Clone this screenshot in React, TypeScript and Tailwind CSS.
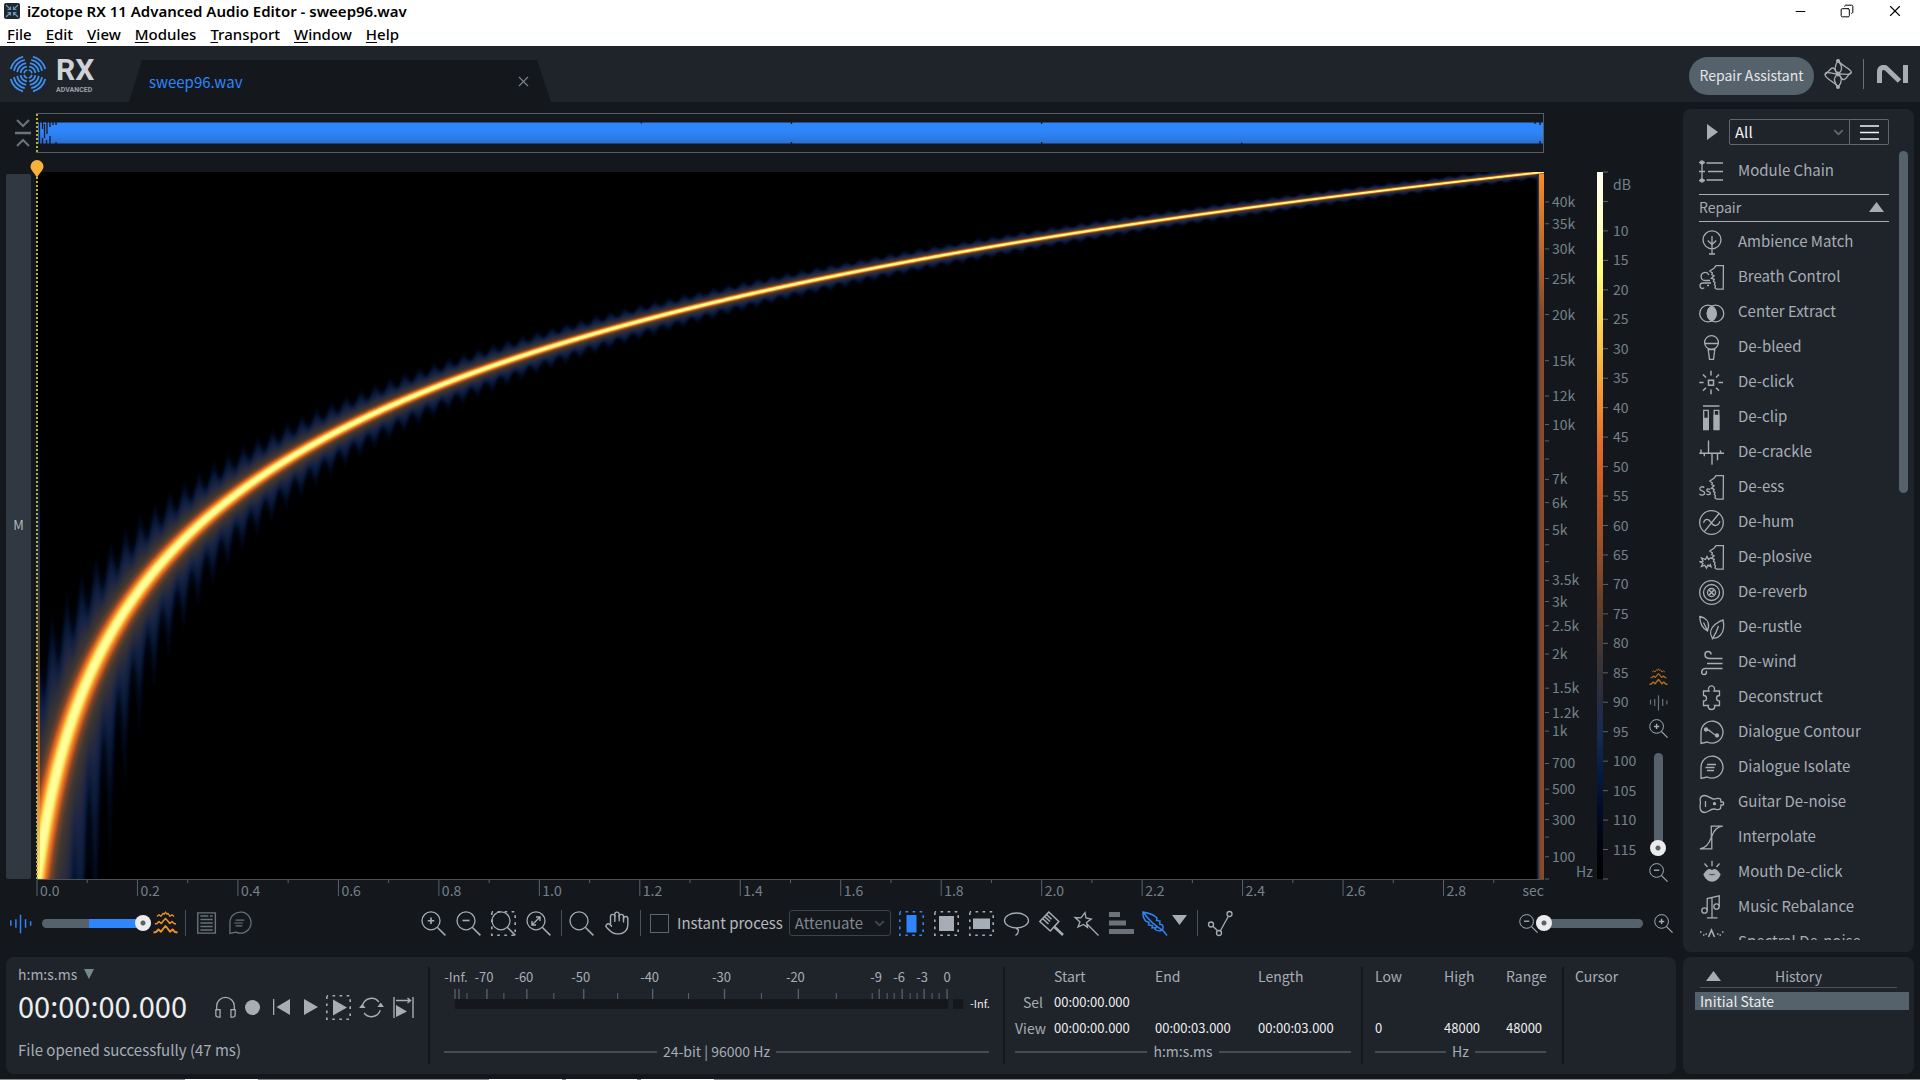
import React from 'react';
import { ChevronDown, Copy, Hand, Minus, X } from 'lucide-react';

const MAX_HZ = 48000;
const PLOT_W = 1507;
const PLOT_H = 707;

// mel style frequency axis, 0 = top, 1 = bottom
const freqPos = (hz: number) =>
    1 - Math.log(1 + Math.max(hz, 0) / 700) / Math.log(1 + MAX_HZ / 700);

// [distance from the ridge, r, g, b]
const HEAT: number[][] = [
    [0, 255, 255, 175],
    [4, 255, 250, 130],
    [6, 253, 205, 75],
    [8, 243, 145, 48],
    [11, 205, 92, 36],
    [14, 120, 68, 40],
    [19, 66, 56, 50],
    [26, 46, 46, 58],
    [33, 26, 36, 68],
    [41, 10, 26, 56],
    [50, 3, 10, 27],
    [64, 0, 0, 0],
];

const heatColor = (d: number) => {
    const i = Math.max(1, HEAT.findIndex(stop => stop[0] >= d));
    const a = HEAT[i - 1];
    const b = HEAT[i];
    const t = (d - a[0]) / (b[0] - a[0]);
    const mix = [1, 2, 3].map(k => Math.round(a[k] + (b[k] - a[k]) * t));
    return `rgb(${mix.join(',')})`;
};

const ridgeBand = (d: number) => {
    const depth = Math.min(Math.max((d - 18) / 30, 0), 1) * 0.18;
    const top: string[] = [];
    const bottom: string[] = [];
    for (let x = 0; x <= PLOT_W; x += 1) {
        const w = d * (1 + depth * Math.cos((2 * Math.PI * x) / 14.7));
        const hz = (px: number) => (px * MAX_HZ) / PLOT_W;
        top.push(`${x},${(freqPos(hz(x + w)) * PLOT_H).toFixed(1)}`);
        bottom.push(`${x},${(freqPos(hz(x - w)) * PLOT_H).toFixed(1)}`);
    }
    return [...top, ...bottom.reverse()].join(' ');
};

const BANDS = Array.from({ length: 58 }, (_, i) => {
    const d = 63 - i * 1.1;
    return { d, points: ridgeBand(d), color: heatColor(d) };
});

const FREQ_LABELS: [number, string][] = [
    [40000, '40k'], [35000, '35k'], [30000, '30k'], [25000, '25k'], [20000, '20k'],
    [15000, '15k'], [12000, '12k'], [10000, '10k'], [9000, ''], [8000, ''], [7000, '7k'],
    [6000, '6k'], [5000, '5k'], [4500, ''], [4000, ''], [3500, '3.5k'], [3000, '3k'],
    [2500, '2.5k'], [2000, '2k'], [1500, '1.5k'], [1200, '1.2k'], [1000, '1k'],
    [700, '700'], [500, '500'], [400, ''], [300, '300'], [200, ''], [100, '100'],
];

const METER_LABELS: [number, string][] = [
    [456, '-Inf.'], [484, '-70'], [524, '-60'], [581, '-50'], [650, '-40'], [722, '-30'],
    [796, '-20'], [877, '-9'], [900, '-6'], [923, '-3'], [948, '0'],
];
const METER_TALL = [455, 459, 487, 527, 584, 653, 725, 799, 880, 903, 925, 948];
const METER_SHORT = [467, 504, 554, 618, 689, 762, 837, 873, 888, 895, 911, 918, 933, 940];
const meterX = (x: number) => `${((x - 444) / 546) * 100}%`;

const Svg = ({ children, size = 'size-[25px]', className = '' }: { children: React.ReactNode; size?: string; className?: string }) => (
    <svg viewBox="0 0 25 25" className={`${size} shrink-0 overflow-visible ${className}`} fill="none" stroke="currentColor" strokeWidth="1.3">
        {children}
    </svg>
);

const Face = () => <path d="M24.4 .7H17L15 3.2 10.8 6l2.6 2-.6 1.6 2.2 1.2-2.6 2.4 2.8 1.2-.8 2 1.6 1-.6 2.2 1 1-.4 2.4 1.8 1.2 6.4-.2z" />;

const Bubble = () => <path d="M2 23.4V12A11 11 0 1 1 8.2 22z" />;

const Waves = () => (
    <g strokeLinejoin="round">
        <path d="M4 5.5l2-1.8 2 1.6 2-3 1.2 1L12.500 1l1.300 2.300 1.200-1 2 3 2-1.600 2 1.800" strokeWidth="1.2" />
        <path d="M2 13l2-.5 2-2 2.200 2 2-2.500 2.300-2.500 2.300 2.500 2 2.500 2.200-2 2 2 2 .5" strokeWidth="1.5" />
        <path d="M.5 21.500l2.500-.5 2.500-2.500 2.500 2.300 2-2.800 2.500-3 2.500 3 2 2.800 2.500-2.300 2.500 2.500 2.500.5" strokeWidth="1.9" />
    </g>
);

const WaveBars = () => <path d="M2 9v6M7.500 8v9M12.500 3v20M18 8v9M23.500 10v5" strokeWidth="1.6" />;

const Magnifier = ({ children, size }: { children?: React.ReactNode; size?: string }) => (
    <Svg size={size}>
        <circle cx="10" cy="9.800" r="9" />
        <path d="M16.200 16.200L24.400 24.400" strokeWidth="1.5" />
        {children}
    </Svg>
);

const Marquee = () => <path d="M.8 .8H24.200V24.200H.8z" strokeWidth="1.6" strokeDasharray="2.6 4.45" strokeDashoffset="1.3" />;

const MODULES: { name: string; icon: React.ReactNode }[] = [
    { name: 'Ambience Match', icon: <><circle cx="13" cy="9.800" r="9" /><path d="M13 6v18M8.800 10.500l4.200 4 4.200-4M10 24h6" /></> },
    { name: 'Breath Control', icon: <><Face /><path d="M11 15.500H6a4 4 0 1 1 3.800-5.500M12 18H4a3 3 0 0 0-3 3c0 2.500 3 3.200 4.200 1.600M10 20.500H8" /></> },
    { name: 'Center Extract', icon: <><circle cx="9" cy="13.500" r="8.300" /><circle cx="16.500" cy="13.500" r="8.300" /><path d="M12.700 6.200a8.300 8.300 0 0 1 0 14.600 8.300 8.300 0 0 1 0-14.600z" fill="currentColor" /></> },
    { name: 'De-bleed', icon: <><circle cx="12.500" cy="7.500" r="6.900" /><path d="M5.600 8.500h13.800M9.200 14.500l1.300 9.900h4l1.300-9.900z" /></> },
    { name: 'De-click', icon: <path d="M9.500 10.200h5v5h-5zM12 .8V5.500M12 19.500v4.700M.3 12.500H4.600M19.500 12.500H24M4 4.500l3 3M20 4.500l-3 3M4 20.700l3-3M20 20.700l-3-3" strokeWidth="1.5" /> },
    { name: 'De-clip', icon: <><path d="M4 1h16.500" strokeWidth="1.500" /><path d="M4.700 5.300h4.600v19H4.700zM15.200 5.300h4.600v19h-4.600z" /><path d="M4.700 13.500h4.600v11H4.700zM15.200 10.500h4.600v14h-4.600z" fill="currentColor" /></> },
    { name: 'De-crackle', icon: <path d="M.3 13.300H25M2 9.500v4M5.300 13.300v3M9.500.5v12.800M13 13.300v11.500M18.500 13.300v7M21.500 10.500v3" strokeWidth="1.400" /> },
    { name: 'De-ess', icon: <><Face /><path d="M5.300 12.600C3.500 11 .8 11.800.8 13.700c0 2.600 4.900 1.600 4.900 4.400 0 2.100-3.300 2.800-5.300 1M11.200 14.500c-1.400-1-3.500-.6-3.500.8 0 1.700 3.700 1.100 3.700 2.900 0 1.700-2.700 1.800-4 .8" /></> },
    { name: 'De-hum', icon: <><circle cx="12.500" cy="12.500" r="11.800" /><path d="M20 3.500L5.200 21.800M4.500 12.800c1.500-4.500 5-4.500 7.500-.5s6.500 5 9-1" /></> },
    { name: 'De-plosive', icon: <><Face /><path d="M12 12.500l-2.500 2-1.500-3-1.500 3-4-1.500 1.500 3-3 .8 3 1.500-1.500 3.200 3.200-1.300 1.800 3 1.300-3 3.200 1.500-1-3" /></> },
    { name: 'De-reverb', icon: <><circle cx="12.500" cy="12.500" r="11.800" /><circle cx="12.500" cy="12.500" r="8" /><circle cx="12.500" cy="12.500" r="4" /><path d="M10 10l5 5M15 10l-5 5" strokeWidth="1.600" /></> },
    { name: 'De-rustle', icon: <><path d="M8.500 16C3 13 .8 9 .8 1.500 6 2.500 10.200 6 9.500 12zM4.500 7.500l4 8M13 22.500c-3-4.500-1-9.500 3-13 3-2.500 6-4 8-4.500 1.500 6 .5 11.500-2.500 15-2.500 2.800-6 3.500-8.500 2.500zM19.500 11c-1.500 5-3.500 9-6.500 13.500" /></> },
    { name: 'De-wind', icon: <path d="M23.500 8.500H11C8 8.500 6 7 6 4.500c0-4 6-4 6 0M8 13.500h15.500M23.500 18.500H6.500c-4.500 0-5 6-1.500 6 2.500 0 3-2.500 2-3.500" strokeWidth="1.500" /> },
    { name: 'Deconstruct', icon: <path d="M4.500 6H10C8.500 3.500 10 .8 12.500.8S16.500 3.500 15 6h5.500v4.500c-2 0-3 1-3 2.800s1 2.800 3 2.800V20.500H15.500c1 2-.5 4-3 4s-4-2-3-4H4.500V16c2 0 3-1 3-2.800s-1-2.700-3-2.700z" /> },
    { name: 'Dialogue Contour', icon: <><Bubble /><circle cx="7" cy="9.500" r="1.500" fill="currentColor" /><circle cx="18" cy="15.500" r="1.500" fill="currentColor" /><path d="M7 9.500c5-.5 6 5.500 11 6" /></> },
    { name: 'Dialogue Isolate', icon: <><Bubble /><path d="M8 9.500h9M6.500 12.500h9M8 15.500h7" /></> },
    { name: 'Guitar De-noise', icon: <><path d="M24.500 12v3M24.500 12h-2.500l-.5-3c-3-2-4 .5-7 0S9 5.500 5.500 5.500C1 5.500.7 9 1.500 12.500.5 18 1 22.500 5.500 22.500c4 0 5-3 9-3.500 3-.3 4 2 7-.5l.5-3.500h2.500M6.500 11v6" /><circle cx="15.500" cy="13.700" r="1" fill="currentColor" /></> },
    { name: 'Interpolate', icon: <path d="M23.800 1.200C18 1.500 15 5 12.500 12S7 23.500.8 23.800M23.800 1.200H12.300v11M12.800 12v11.800H.8" /> },
    { name: 'Mouth De-click', icon: <><path d="M13 .8v5.500M5.500 3.500l3 3.500M20.500 3.500l-3 3.500" /><path d="M5 14.500c3-5 6-6 8-3.500 2-2.500 5-1.500 8 3.500-2 4.500-5 6.500-8 6.500s-6-2-8-6.500z" fill="currentColor" /><path d="M8.500 14.500c3-1.200 6-1.200 9 0-3 2-6 2-9 0z" fill="#1f242b" /></> },
    { name: 'Music Rebalance', icon: <><circle cx="5.500" cy="15.500" r="2.700" /><circle cx="17.500" cy="11.500" r="2.700" /><path d="M8.200 15.500V3.500L20.200.8V11.500M13 2.500V22.500M8 22.800h10.500" /></> },
    { name: 'Spectral De-noise', icon: <path d="M1 2h1.500M4 5h1.500M6.500 4H8M18 4h1.500M20.500 5H22M23 2h1.500M9.500 7l3-7 3 7" strokeWidth="1.600" /> },
];

const IconButton = ({ label, children, className = '' }: { label: string; children: React.ReactNode; className?: string }) => (
    <button aria-label={label} className={`flex shrink-0 items-center justify-center ${className}`}>
        {children}
    </button>
);

const thumb =
    '[&::-webkit-slider-thumb]:appearance-none [&::-webkit-slider-thumb]:size-4 [&::-webkit-slider-thumb]:rounded-full [&::-webkit-slider-thumb]:bg-[radial-gradient(circle,#56626b_2px,#ececec_3px)]';
const sliderBase = `appearance-none bg-transparent ${thumb}`;
const hTrack =
    '[&::-webkit-slider-runnable-track]:h-[9px] [&::-webkit-slider-runnable-track]:rounded-full [&::-webkit-slider-thumb]:-mt-[4px]';

const WindowBar = () => (
    <div className="h-[46px] bg-white font-['Noto_Sans','Open_Sans',sans-serif] text-[15px] text-black">
        <div className="flex h-[22px] items-center pl-1">
            <svg viewBox="0 0 16 16" className="size-4">
                <rect width="16" height="16" rx="2" fill="#1d2730" />
                <path d="M2 2l4 4M14 2l-4 4M2 14l4-4M14 14l-4-4M6.500 3.500v3h-3M9.500 3.500v3h3M6.500 12.500v-3h-3M9.500 12.500v-3h3" stroke="#6d95b5" strokeWidth="1.200" fill="none" />
            </svg>
            <h1 className="ml-[7px] font-semibold leading-[22px]">iZotope RX 11 Advanced Audio Editor - sweep96.wav</h1>
            <div className="ml-auto flex items-center gap-8 pr-4">
                <IconButton label="Minimize"><Minus className="size-[15px]" strokeWidth={1.7} /></IconButton>
                <IconButton label="Restore"><Copy className="size-[14px] -scale-x-100" strokeWidth={1.7} /></IconButton>
                <IconButton label="Close"><X className="size-[18px]" strokeWidth={1.5} /></IconButton>
            </div>
        </div>
        <nav className="flex h-6 items-center gap-[14px] pl-[7px] font-medium">
            {['File', 'Edit', 'View', 'Modules', 'Transport', 'Window', 'Help'].map(item => (
                <button key={item} className="leading-6">
                    <span className="underline underline-offset-2">{item[0]}</span>{item.slice(1)}
                </button>
            ))}
        </nav>
    </div>
);

const ring = (r: number, spread: number) =>
    [45, 135, 225, 315].map(a => {
        const p = (deg: number) => `${(19 + r * Math.cos((deg * Math.PI) / 180)).toFixed(2)} ${(19 + r * Math.sin((deg * Math.PI) / 180)).toFixed(2)}`;
        return `M${p(a - spread)}A${r} ${r} 0 0 1 ${p(a + spread)}`;
    }).join('');

const Header = () => (
    <header className="flex h-14 shrink-0 bg-[#1f242b]">
        <div className="flex w-[129px] pl-[9px]">
            <svg viewBox="0 0 38 38" className="mt-[9px] size-[38px]" fill="none" stroke="#3f90f5" strokeWidth="1.800">
                <path d={ring(18, 29) + ring(14.500, 32) + ring(11, 35) + ring(7.500, 36)} />
                <path d={ring(4, 34)} strokeWidth="1.500" />
            </svg>
            <div className="ml-[9px] flex flex-col pt-[9px] font-['Roboto',sans-serif] font-bold text-[#cfd2d6]">
                <span className="text-[30px] leading-[30px]">RX</span>
                <span className="mt-px text-[7px] leading-2 text-[#9aa1a8]">ADVANCED</span>
            </div>
        </div>
        <div className="mt-[14px] flex w-[422px] items-center bg-[#14181c] pl-5 pr-[19px] pt-px [clip-path:polygon(13px_0,calc(100%-14px)_0,100%_100%,0_100%)]">
            <span className="text-[15px] leading-5 text-[#2f86fb]">sweep96.wav</span>
            <IconButton label="Close tab" className="ml-auto text-[#7b868e]"><X className="size-[17px]" strokeWidth={1.500} /></IconButton>
        </div>
        <div className="ml-auto flex items-center pr-3 text-[#a7adb5]">
            <button className="mt-1 h-[38px] w-[125px] rounded-full bg-[#56626b] pb-px text-[14px] text-[#e4e6e8]">Repair Assistant</button>
            <svg viewBox="0 0 28 30" className="ml-[10px] h-[30px] w-7" fill="none" stroke="currentColor" strokeWidth="1.300">
                <path d="M14 1.500c4 5.500 13 8.500 13.300 11.500.2 3.500-5 2-13.300 2S2 11 1 15.500c-.3 4 9 7 13 12.500" />
                <path d="M14 1.500C11 6 9.500 12 14 15s4.500 8 0 13" />
                <path d="M14 1.500c4 5 5.500 9.500 0 13.500s-4 8 0 13" />
                <path d="M1 15.500c3-1 5-7 8-6.500 3 .5 2 4 5 6s3 6 6 5.500c3-.5 4-5.500 7-7" />
                <circle cx="14" cy="1.800" r="1.300" fill="currentColor" />
                <circle cx="14" cy="15" r="1.800" fill="currentColor" />
                <circle cx="14" cy="28" r="1.300" fill="currentColor" />
            </svg>
            <span className="ml-[11px] h-[30px] w-px bg-[#68727a]" />
            <svg viewBox="0 0 31 18" className="ml-[13px] h-[18px] w-[31px]" fill="none" stroke="currentColor" strokeWidth="5">
                <path d="M2.500 18V7c0-4 4-6 7-3.500L22.500 16M28.500 0V18" />
            </svg>
        </div>
    </header>
);

const Overview = () => (
    <div className="flex h-10">
        <div className="flex w-[30px] text-[#6b747c]">
            <svg viewBox="0 0 18 28" className="ml-2 mt-[6px] h-7 w-[18px]" fill="none" stroke="currentColor" strokeWidth="2">
                <path d="M3 1l6 6 6-6M3 27l6-6 6 6" />
                <path d="M1 14h16" strokeWidth="2.500" />
            </svg>
        </div>
        <div className="mr-[132px] flex flex-1 items-center border border-[#555d64] border-l-0">
            <div className="h-full border-l-2 border-dotted border-[#b5b03e]" />
            <svg viewBox="0 0 1504 22" preserveAspectRatio="none" className="h-[22px] w-full">
                <defs>
                    <linearGradient id="wave" x1="0" y1="0" x2="0" y2="1">
                        <stop offset=".45" stopColor="#2f86fb" />
                        <stop offset="1" stopColor="#2a70d2" />
                    </linearGradient>
                </defs>
                <rect y=".5" width="1504" height="21" fill="url(#wave)" />
                <path d="M1.500 0v22M4.500 0v7M4.500 16v6M6.500 2v14M9 0v12M8.500 18v4M12 0v5M12 14v8M15 0v3M18 0v3M18 20v2M753 0v2M753 20v2M1003 0v2M1003 20v2M603 0v1.500M1203 20.500v1.500M1496 0v2M1501 0v3M1501 19v3" stroke="#14181c" strokeWidth="1.300" />
            </svg>
        </div>
    </div>
);

const Spectrogram = () => (
    <div className="relative min-w-0 flex-1 bg-black">
        <svg viewBox={`0 0 ${PLOT_W} ${PLOT_H}`} preserveAspectRatio="none" className="absolute inset-0 h-full w-full">
            <defs>
                <linearGradient id="startEdge" x1="0" y1="0" x2="0" y2="1">
                    <stop offset=".35" stopColor="#0a1c3e" stopOpacity="0" />
                    <stop offset=".5" stopColor="#12254c" />
                    <stop offset=".7" stopColor="#54402f" />
                    <stop offset=".85" stopColor="#d8662a" stopOpacity=".8" />
                    <stop offset="1" stopColor="#fff27a" />
                </linearGradient>
                <linearGradient id="endEdge">
                    <stop offset="0" stopColor="#0c1f44" stopOpacity="0" />
                    <stop offset=".3" stopColor="#26304a" />
                    <stop offset=".5" stopColor="#7d472b" />
                    <stop offset="1" stopColor="#8e4d2b" />
                </linearGradient>
                <linearGradient id="endGlow" x1="0" y1="0" x2="0" y2="1">
                    <stop offset="0" stopColor="#f58c2a" />
                    <stop offset=".2" stopColor="#f58c2a" stopOpacity="0" />
                </linearGradient>
            </defs>
            {BANDS.map(band => (
                <polygon key={band.d} points={band.points} fill={band.color} />
            ))}
            <rect width="3" height={PLOT_H} fill="url(#startEdge)" />
            <rect x={PLOT_W - 8} y="2" width="8" height={PLOT_H} fill="url(#endEdge)" />
            <rect x={PLOT_W - 5} y="2" width="5" height={PLOT_H} fill="url(#endGlow)" />
        </svg>
        <div className="absolute inset-y-0 -left-px border-l-2 border-dotted border-[#b5b03e]" />
        <svg viewBox="0 0 14 18" className="absolute -left-[7px] -top-[12px] h-[18px] w-[14px]">
            <path d="M7 18C5 13 .500 10.500.500 6.500a6.500 6.500 0 0 1 13 0C13.500 10.500 9 13 7 18z" fill="#f7b23c" />
        </svg>
    </div>
);

const FrequencyAxis = () => (
    <svg className="w-[53px] shrink-0 overflow-visible" fill="#75818a" fontSize="14">
        {FREQ_LABELS.map(([hz, label]) => {
            const y = `${freqPos(hz) * 100}%`;
            return (
                <g key={hz}>
                    <line x1="1" x2="5" y1={y} y2={y} stroke="#59636b" />
                    <text x="8" y={y} dy="5">{label}</text>
                </g>
            );
        })}
        <line x1="1" x2="5" y1="100%" y2="100%" stroke="#59636b" />
        <text x="32" y="99%" dy="5">Hz</text>
    </svg>
);

const LevelAxis = () => (
    <svg className="w-[45px] shrink-0 overflow-visible" fill="#75818a" fontSize="14">
        {Array.from({ length: 25 }, (_, i) => {
            const y = `${(i / 24) * 100}%`;
            return (
                <g key={i}>
                    <line x1="0" x2="5" y1={y} y2={y} stroke="#59636b" />
                    {i > 1 && i < 24 && <text x="10" y={y} dy="5">{i * 5}</text>}
                </g>
            );
        })}
        <text x="10" y="18">dB</text>
    </svg>
);

const TimeAxis = () => (
    <div className="ml-[31px] mr-[132px] h-[31px] border-t border-[#4a5258]">
        <svg className="h-5 w-full overflow-visible" fill="#75818a" fontSize="14">
            {Array.from({ length: 30 }, (_, i) => {
                const x = `${(i / 30) * 100}%`;
                return (
                    <g key={i}>
                        <line x1={x} x2={x} y1="0" y2={i % 2 ? 3 : 16} stroke="#59636b" />
                        {i % 2 === 0 && <text x={x} y="16" dx="3">{(i / 10).toFixed(1)}</text>}
                    </g>
                );
            })}
            <text x="100%" y="16" textAnchor="end">sec</text>
        </svg>
    </div>
);

const Divider = () => <span className="h-[26px] w-px shrink-0 bg-[#4a535a]" />;

const Toolbar = () => (
    <div className="mb-4 flex h-[26px] items-center text-[#a7adb5]">
        <div className="flex items-center pl-[3px]">
            <IconButton label="Waveform" className="text-[#2f86fb]"><Svg size="size-[23px]"><WaveBars /></Svg></IconButton>
            <input type="range" aria-label="Waveform opacity" defaultValue={100} className={`ml-[10px] h-4 w-[109px] ${sliderBase} ${hTrack} [&::-webkit-slider-runnable-track]:bg-[linear-gradient(90deg,#56626b_43%,#2f86fb_43%)]`} />
            <IconButton label="Spectrogram" className="ml-[2px] text-[#f0922b]"><Svg><Waves /></Svg></IconButton>
            <div className="ml-[7px] flex items-center gap-[10px] text-[#68727a]">
                <Divider />
                <IconButton label="Notes">
                    <Svg size="size-[22px]"><path d="M2 1h20v23H2zM5 4.500h9M16 4.500h3M5 8.500h14M5 12.500h14M5 16.500h14M5 20.500h14" strokeWidth="1.600" /></Svg>
                </IconButton>
                <IconButton label="Comments"><Svg size="size-[24px]"><Bubble /><path d="M8 9.500h9M6.500 12.500h9M8 15.500h7" /></Svg></IconButton>
            </div>
        </div>
        <div className="ml-[169px] flex items-center gap-[10px]">
            <IconButton label="Zoom in"><Magnifier><path d="M10 6.500v6.500M6.700 9.800h6.600" strokeWidth="1.600" /></Magnifier></IconButton>
            <IconButton label="Zoom out"><Magnifier><path d="M6.500 9.500h7" strokeWidth="1.600" /></Magnifier></IconButton>
            <IconButton label="Zoom to selection"><Magnifier><Marquee /></Magnifier></IconButton>
            <IconButton label="Zoom to fit"><Magnifier><path d="M6.500 13.500l7-7M6 10v4h4M10 6h4v4" strokeWidth="1.400" /></Magnifier></IconButton>
            <Divider />
            <div className="-ml-[3px] flex gap-[10px]">
                <IconButton label="Zoom tool"><Magnifier /></IconButton>
                <IconButton label="Grab"><Hand className="size-[26px]" strokeWidth={1.300} /></IconButton>
            </div>
            <Divider />
            <label className="-ml-px flex items-center gap-2 text-[15px] leading-5 text-[#b4b9bf]">
                <input type="checkbox" className="size-[19px] appearance-none border border-[#5c676f]" />
                Instant process
            </label>
            <div className="relative -ml-1 flex items-center">
                <select aria-label="Instant process mode" className="h-[26px] w-[102px] appearance-none rounded-[3px] border border-[#3b444b] pl-[5px] text-[15px] leading-5 text-[#7e868d]">
                    <option>Attenuate</option>
                </select>
                <ChevronDown className="pointer-events-none absolute right-1 size-[15px] text-[#3f484f]" strokeWidth={3} />
            </div>
            <div className="-ml-[2px] flex items-center gap-[10px]">
                <IconButton label="Time selection" className="text-[#2f86fb]"><Svg><Marquee /><path d="M7.500 4h10v17.500h-10z" fill="currentColor" stroke="none" /></Svg></IconButton>
                <IconButton label="Time-frequency selection"><Svg><Marquee /><path d="M5 5h15v15H5z" fill="currentColor" stroke="none" /></Svg></IconButton>
                <IconButton label="Frequency selection"><Svg><Marquee /><path d="M4 7.500h17v10.500H4z" fill="currentColor" stroke="none" /></Svg></IconButton>
                <IconButton label="Lasso"><Svg><ellipse cx="12.500" cy="9.500" rx="12" ry="7.500" /><path d="M12 17.500c3 0 3.500 4-.5 7" /></Svg></IconButton>
                <IconButton label="Brush"><Svg><path d="M.8 10.500L9.800 1l10 9.500-8.500 9.500zM3.500 7.500l6 5.500M5.500 5.500l5.500 5M7.500 3.500l5 4.700" strokeWidth="1.500" /><path d="M15 15.500l9 8.500" strokeWidth="2.600" /></Svg></IconButton>
                <IconButton label="Magic wand"><Svg><path d="M11 1.500l1 5.500 5.300 1L12.500 11.500l1 5-4-3-5.500 2.500 2-5L1 6.500l6 .3zM12.500 12.500l12 12" /></Svg></IconButton>
                <IconButton label="Harmonics" className="text-[#6b727a]"><Svg><path d="M0 3.500h11M0 12h17M0 20.500h25" strokeWidth="5" /></Svg></IconButton>
                <IconButton label="Feather selection" className="-ml-[2px] text-[#2f86fb]"><Svg><path d="M1 1c6 1 11 3 14 6l-.5 2.500L18 10l-.3 3 2.800 1c1 2 .5 4-.5 5-2 1-5 1-7-.5l1-2-4 .5.5-2.500-4-.5.5-2.500L3.500 10C1.500 7 .5 4 1 1zM1 1C8 11 15 16 21 19.500l4 5" strokeWidth="1.400" /></Svg></IconButton>
                <svg viewBox="0 0 15 10" className="-ml-[5px] mb-[6px] h-[10px] w-[15px]"><path d="M0 0h15L7.500 10z" fill="currentColor" /></svg>
                <Divider />
                <IconButton label="Envelope"><Svg><path d="M4.500 15l5 4.500M12 20.500L20.500 5" /><circle cx="3" cy="13.500" r="2.500" /><circle cx="11" cy="22" r="2.500" /><circle cx="21.500" cy="3" r="2.500" /></Svg></IconButton>
            </div>
        </div>
        <div className="ml-auto flex items-center pr-[3px]">
            <IconButton label="Zoom out time"><Magnifier size="size-[19px]"><path d="M6.500 9.500h7" strokeWidth="1.800" /></Magnifier></IconButton>
            <input type="range" aria-label="Time zoom" defaultValue={0} className={`-ml-[2px] h-4 w-[107px] ${sliderBase} ${hTrack} [&::-webkit-slider-runnable-track]:bg-[#56626b]`} />
            <IconButton label="Zoom in time" className="ml-[11px]"><Magnifier size="size-[19px]"><path d="M10 6.200v7M6.500 9.800h7" strokeWidth="1.800" /></Magnifier></IconButton>
        </div>
    </div>
);

const Editor = () => (
    <section className="flex min-w-0 flex-1 flex-col pt-[11px]">
        <Overview />
        <div className="mt-[19px] flex min-h-0 flex-1">
            <div className="mr-[6px] mt-[2px] flex w-[25px] items-center justify-center rounded-[2px] bg-[#303841] pb-1 text-[13px] text-[#b4b9bf]">M</div>
            <Spectrogram />
            <FrequencyAxis />
            <div className="w-[6px] bg-[linear-gradient(#fffdf5,#ffffc8_7%,#ffff7c_14%,#f9bf45_25%,#f08c2f_33%,#e0692a_39%,#c65a24_45%,#8e4c28_55%,#6a4029_60%,#453830_67%,#333236_71%,#262b44_76%,#132a52_80%,#061b40_85%,#020d26_90%,#01040e_95%,#000)]" />
            <LevelAxis />
            <div className="flex w-7 flex-col items-start justify-end pl-px text-[#a7adb5]">
                <IconButton label="Show spectrogram" className="text-[#b0701f]"><Svg size="size-[19px]"><Waves /></Svg></IconButton>
                <IconButton label="Show waveform" className="mt-[6px] text-[#68727a]"><Svg size="size-[19px]"><WaveBars /></Svg></IconButton>
                <IconButton label="Zoom in frequency" className="mt-[7px]"><Magnifier size="size-[19px]"><path d="M10 6.200v7M6.500 9.800h7" strokeWidth="1.800" /></Magnifier></IconButton>
                <input type="range" aria-label="Frequency zoom" defaultValue={0} className={`ml-px mt-[15px] h-[103px] w-4 [direction:rtl] [writing-mode:vertical-lr] ${sliderBase} [&::-webkit-slider-runnable-track]:mx-auto [&::-webkit-slider-runnable-track]:w-[9px] [&::-webkit-slider-runnable-track]:rounded-full [&::-webkit-slider-runnable-track]:bg-[#56626b] [&::-webkit-slider-thumb]:-ml-[4px]`} />
                <IconButton label="Zoom out frequency" className="mb-[-3px] mt-[7px]"><Magnifier size="size-[19px]"><path d="M6.500 9.500h7" strokeWidth="1.800" /></Magnifier></IconButton>
            </div>
        </div>
        <TimeAxis />
        <Toolbar />
    </section>
);

const ModulePanel = () => (
    <aside className="mt-[7px] flex w-[231px] shrink-0 flex-col rounded-lg bg-[#1f242b] pb-3 pl-4 pt-[10px] text-[#a7adb5]">
        <div className="flex items-center pl-2">
            <IconButton label="Preview modules"><svg viewBox="0 0 11 16" className="h-4 w-[11px]"><path d="M0 0l11 8L0 16z" fill="currentColor" /></svg></IconButton>
            <div className="relative ml-[11px] flex items-center">
                <select aria-label="Module category" className="h-[26px] w-[121px] appearance-none rounded-l-[2px] border border-[#5c676f] pl-[5px] text-[15px] leading-5 text-[#f2f3f4]">
                    <option>All</option>
                </select>
                <ChevronDown className="pointer-events-none absolute right-1 size-[15px] text-[#5c676f]" strokeWidth={3} />
            </div>
            <IconButton label="Menu" className="h-[26px] w-[39px] rounded-r-[2px] border border-l-0 border-[#5c676f]">
                <svg viewBox="0 0 19 15" className="h-[15px] w-[19px]"><path d="M0 1h19M0 7.500h19M0 14h19" stroke="#f2f3f4" strokeWidth="1.500" /></svg>
            </IconButton>
        </div>
        <div className="mt-[6px] flex min-h-0 flex-1">
            <div className="flex w-[190px] flex-col overflow-hidden">
                <button className="flex h-[43px] shrink-0 items-center pb-[6px] text-[15px] leading-5">
                    <Svg className="mt-1"><path d="M3 3v19M0 3.500h6M0 12.500h6M0 21.500h6M7.500 4H24M9 12.500H24M7.500 21H24" /><circle cx="3" cy="3.500" r="1.500" fill="currentColor" /><circle cx="3" cy="21.500" r="1.500" fill="currentColor" /></Svg>
                    <span className="ml-[14px]">Module Chain</span>
                </button>
                <button className="flex h-7 shrink-0 items-center border-y border-[#a7adb5] pb-[2px] pr-[5px] text-[14px] leading-5">
                    Repair
                    <svg viewBox="0 0 15 10" className="ml-auto h-[10px] w-[15px]"><path d="M0 10h15L7.500 0z" fill="currentColor" /></svg>
                </button>
                <ul className="mt-px">
                    {MODULES.map(module => (
                        <li key={module.name}>
                            <button className="flex h-[35px] items-center text-[15px] leading-5">
                                <Svg className="mt-[3px]">{module.icon}</Svg>
                                <span className="ml-[14px] whitespace-nowrap">{module.name}</span>
                            </button>
                        </li>
                    ))}
                </ul>
            </div>
            <div className="ml-[10px] h-[342px] w-[9px] rounded-full bg-[#56626b]" />
        </div>
    </aside>
);

const Caption = ({ children }: { children: React.ReactNode }) => (
    <div className="flex items-center gap-[6px] text-[14px] leading-5">
        <span className="h-[2px] flex-1 bg-[#454d54]" />
        <span className="pb-[2px]">{children}</span>
        <span className="h-[2px] flex-1 bg-[#454d54]" />
    </div>
);

const VRule = () => <span className="my-[10px] w-[2px] shrink-0 bg-[#14181c]" />;

const Transport = () => (
    <div className="flex w-[422px] flex-col pl-3">
        <button className="mt-[7px] flex items-center gap-[7px] text-[14px] leading-5">
            h:m:s.ms
            <svg viewBox="0 0 10 10" className="h-[10px] w-[10px]"><path d="M0 0h10L5 10z" fill="#78868f" /></svg>
        </button>
        <div className="mt-1 flex h-[38px] items-center">
            <span className="w-[197px] pb-1 text-[29px] leading-[38px] text-[#eceded]">00:00:00.000</span>
            <IconButton label="Monitor"><Svg size="size-[21px]"><path d="M2 16V11a10.500 10.500 0 0 1 21 0v5M1 15h5v9H4a3 3 0 0 1-3-3zM24 15h-5v9h2a3 3 0 0 0 3-3z" strokeWidth="1.500" /></Svg></IconButton>
            <IconButton label="Record" className="ml-[9px]"><span className="size-[15px] rounded-full bg-[#a7adb5]" /></IconButton>
            <IconButton label="Rewind" className="ml-[13px]"><svg viewBox="0 0 17 16" className="h-4 w-[17px]"><path d="M0 0h1.300v16H0zM17 0v16L3.500 8z" fill="currentColor" /></svg></IconButton>
            <IconButton label="Play" className="ml-[14px]"><svg viewBox="0 0 14 16" className="h-4 w-[14px]"><path d="M0 0l14 8-14 8z" fill="currentColor" /></svg></IconButton>
            <IconButton label="Play selection" className="ml-2"><Svg><Marquee /><path d="M7 4.500l14 8-14 8z" fill="currentColor" stroke="none" /></Svg></IconButton>
            <IconButton label="Loop" className="ml-[9px]">
                <Svg size="size-[23px]"><path d="M3 9.500A10 10 0 0 1 20.500 6.500M22 15.500A10 10 0 0 1 4.500 18.500" strokeWidth="1.500" /><path d="M-1 13h7L2.500 8.500zM19 12h7l-3.500-5z" fill="currentColor" stroke="none" /></Svg>
            </IconButton>
            <IconButton label="Play to end" className="ml-[10px]">
                <svg viewBox="0 0 21 21" className="size-[21px]" fill="none" stroke="currentColor" strokeWidth="1.400"><path d="M1 0v21M20 0v21M3 3.500h14M14.500 1l3 2.500-3 2.500" /><path d="M3 8l11 6.500L3 20z" fill="currentColor" stroke="none" /></svg>
            </IconButton>
        </div>
        <p className="mt-3 text-[15px] leading-6">File opened successfully (47 ms)</p>
    </div>
);

const Meter = () => (
    <div className="flex flex-1 flex-col px-[14px] pt-[10px]">
        <svg className="h-[62px] w-full overflow-visible" fill="#a7adb5" fontSize="13">
            {METER_LABELS.map(([x, label]) => <text key={label} x={meterX(x)} y="15" textAnchor="middle">{label}</text>)}
            {METER_TALL.map(x => <line key={x} x1={meterX(x)} x2={meterX(x)} y1="22" y2="32" stroke="#59636b" strokeWidth="1.300" />)}
            {METER_SHORT.map(x => <line key={x} x1={meterX(x)} x2={meterX(x)} y1="26" y2="32" stroke="#59636b" />)}
            <rect x={meterX(455)} y="32" width="90.500%" height="10" fill="#14181c" />
            <rect x={meterX(954)} y="32" width="10" height="10" fill="#14181c" />
            <text x={meterX(971)} y="41" fontSize="11" fill="#eceded">-Inf.</text>
        </svg>
        <div className="mt-[12px]"><Caption>24-bit | 96000 Hz</Caption></div>
    </div>
);

const RangeTable = () => (
    <div className="w-[356px] px-[10px] pt-[6px]">
        <table className="w-full table-fixed text-left text-[14px]">
            <thead>
                <tr className="h-[26px] leading-5">
                    <td className="w-[39px]" />
                    <th className="w-[101px] font-normal">Start</th>
                    <th className="w-[103px] font-normal">End</th>
                    <th className="font-normal">Length</th>
                </tr>
            </thead>
            <tbody className="text-[13px] text-[#eceded]">
                <tr className="h-[26px] leading-5">
                    <th className="pr-[11px] text-right text-[14px] font-normal text-[#a7adb5]">Sel</th>
                    <td>00:00:00.000</td>
                    <td />
                    <td />
                </tr>
                <tr className="h-[26px] leading-5">
                    <th className="text-[14px] font-normal text-[#a7adb5]">View</th>
                    <td>00:00:00.000</td>
                    <td>00:00:03.000</td>
                    <td>00:00:03.000</td>
                </tr>
            </tbody>
        </table>
        <Caption>h:m:s.ms</Caption>
    </div>
);

const FrequencyTable = () => (
    <div className="w-[199px] pl-[12px] pr-4 pt-[6px]">
        <table className="w-full table-fixed text-left">
            <thead className="text-[14px]">
                <tr className="h-[26px] leading-5">
                    <th className="w-[69px] font-normal">Low</th>
                    <th className="font-normal">High</th>
                    <th className="w-[40px] font-normal">Range</th>
                </tr>
            </thead>
            <tbody className="text-[13px] text-[#eceded]">
                <tr className="h-[52px] align-bottom leading-[26px]">
                    <td>0</td>
                    <td>48000</td>
                    <td>48000</td>
                </tr>
            </tbody>
        </table>
        <Caption>Hz</Caption>
    </div>
);

const App: React.FC = () => (
    <div className="flex h-screen flex-col overflow-hidden bg-[#14181c] font-['Noto_Sans_CJK_KR',sans-serif] text-[#a7adb5]">
        <WindowBar />
        <Header />
        <main className="flex min-h-0 flex-1 gap-[7px] px-[6px] pb-[5px]">
            <Editor />
            <ModulePanel />
        </main>
        <footer className="flex h-[117px] shrink-0 gap-[7px] px-[6px]">
            <section className="flex min-w-0 flex-1 rounded-lg bg-[#1f242b]">
                <Transport />
                <VRule />
                <Meter />
                <VRule />
                <RangeTable />
                <VRule />
                <FrequencyTable />
                <VRule />
                <div className="w-[112px] pl-[11px] pt-[9px] text-[14px] leading-5">Cursor</div>
            </section>
            <section className="w-[231px] rounded-lg bg-[#1f242b] pt-[7px] text-[14px]">
                <div className="mx-[17px] flex h-6 items-center border-b border-[#4c545b] leading-5">
                    <svg viewBox="0 0 15 10" className="ml-[6px] h-[10px] w-[15px]"><path d="M0 10h15L7.500 0z" fill="currentColor" /></svg>
                    <h2 className="ml-[54px]">History</h2>
                </div>
                <button className="ml-3 mt-1 block h-[18px] w-[214px] bg-[#56626b] pl-[5px] text-left leading-[18px] text-[#eceded]">Initial State</button>
            </section>
        </footer>
        <div className="mt-[5px] flex h-px shrink-0 bg-[#8a8a8a] pl-[185px]">
            <span className="w-[73px] bg-white" />
            <span className="ml-[231px] w-[73px] bg-white" />
            <span className="ml-1 w-[71px] bg-white" />
            <span className="ml-1 w-[73px] bg-white" />
        </div>
    </div>
);

export default App;
